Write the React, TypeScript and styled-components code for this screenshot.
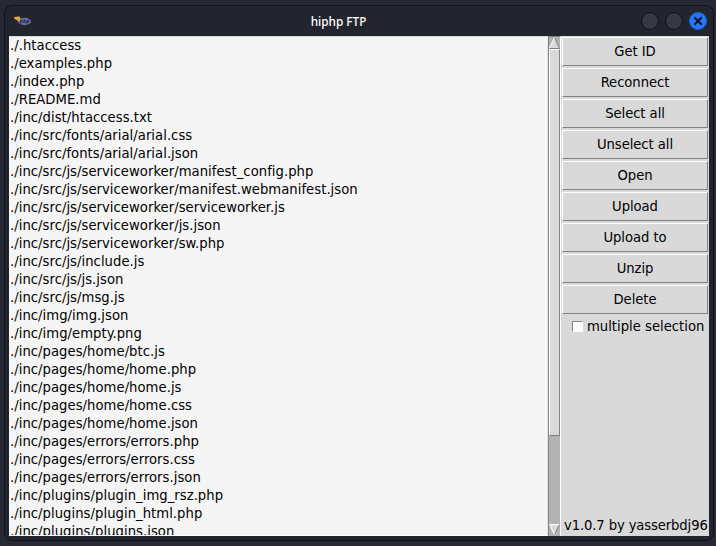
import React from "react";
import styled, { createGlobalStyle } from "styled-components";

const Global = createGlobalStyle`
  * { box-sizing: border-box; }
  body { margin: 0; background: #262935; overflow: hidden; }
`;

const Desktop = styled.div`
  width: 716px;
  height: 546px;
  padding: 5px 2px 5px 4px;
  background: #262935;
  font-family: "DejaVu Sans Condensed", "DejaVu Sans", sans-serif;
  font-stretch: condensed;
  font-size: 14.67px;
  color: #000;
`;

const Window = styled.div`
  height: 536px;
  padding: 0 4px;
  background: #23252e;
  border: 1px solid #10121a;
  border-radius: 8px;
`;

const TitleBar = styled.header`
  display: grid;
  grid-template-columns: 80px 1fr 80px;
  align-items: center;
  height: 30px;
`;

const AppIcon = styled.svg`
  display: block;
  margin-left: 5px;
  margin-top: -1px;
`;

const Title = styled.h1`
  margin: 0;
  padding-right: 41px;
  text-align: center;
  font: 500 11.8px/16px "Noto Sans", sans-serif;
  color: #fff;
`;

const Controls = styled.div`
  display: flex;
  justify-content: flex-end;
  gap: 6px;
  padding-right: 2px;
`;

const Control = styled.button<{ $close?: boolean }>`
  display: grid;
  place-items: center;
  flex: none;
  width: 18px;
  height: 18px;
  padding: 0;
  border-radius: 50%;
  border: 1px solid ${(p) => (p.$close ? "#1f5fd0" : "#0d0f14")};
  background: ${(p) => (p.$close ? "#2777ff" : "#353943")};
`;

const Content = styled.main`
  display: grid;
  grid-template-columns: 539px 13px 1fr;
  height: 500px;
  background: #d9d9d9;
`;

const FileList = styled.ul`
  height: 500px;
  margin: 0;
  padding: 0 0 0 1px;
  overflow: hidden;
  list-style: none;
  background: #f5f5f5;
  box-shadow: inset 0 1px #d9d9d9;
  border-bottom: 1px solid #fff;
  border-right: 1px solid #e4e4e4;
`;

const FileRow = styled.li`
  height: 18px;
  line-height: 18px;
  letter-spacing: 0.04px;
  white-space: pre;
`;

const Scrollbar = styled.div`
  display: flex;
  flex-direction: column;
  height: 500px;
  background: #b3b3b3;
  border-left: 1px solid #828282;
  border-top: 1px solid #828282;
  border-right: 1px solid #fff;
`;

const Thumb = styled.div`
  height: 387px;
  background: #d9d9d9;
  border: 1px solid;
  border-color: #fff #828282 #828282 #fff;
`;

const Trough = styled.div`
  flex: 1;
`;

const Arrow = styled.svg`
  display: block;
  flex: none;
`;

const Sidebar = styled.aside`
  display: flex;
  flex-direction: column;
  min-width: 0;
  padding-top: 1px;
  padding-left: 1px;
`;

const ActionButton = styled.button`
  flex: none;
  height: 29px;
  margin: 0 1px 2px 0;
  padding: 0 0 3px;
  border: 1px solid;
  border-color: #fff #828282 #828282 #fff;
  background: #d9d9d9;
  color: #000;
  font: inherit;
  letter-spacing: -0.06px;
`;

const CheckLabel = styled.label`
  display: flex;
  align-items: center;
  gap: 4px;
  height: 20px;
  padding-left: 10px;
  white-space: nowrap;
`;

const CheckBox = styled.span`
  width: 11px;
  height: 11px;
  background: #fff;
  border: 1px solid;
  border-color: #828282 #fff #fff #828282;
`;

const CheckText = styled.span`
  padding-bottom: 2px;
`;

const Version = styled.footer`
  margin-top: auto;
  height: 21px;
  line-height: 20px;
  padding-left: 2px;
  letter-spacing: -0.12px;
  white-space: nowrap;
`;

const files = [
  "./.htaccess",
  "./examples.php",
  "./index.php",
  "./README.md",
  "./inc/dist/htaccess.txt",
  "./inc/src/fonts/arial/arial.css",
  "./inc/src/fonts/arial/arial.json",
  "./inc/src/js/serviceworker/manifest_config.php",
  "./inc/src/js/serviceworker/manifest.webmanifest.json",
  "./inc/src/js/serviceworker/serviceworker.js",
  "./inc/src/js/serviceworker/js.json",
  "./inc/src/js/serviceworker/sw.php",
  "./inc/src/js/include.js",
  "./inc/src/js/js.json",
  "./inc/src/js/msg.js",
  "./inc/img/img.json",
  "./inc/img/empty.png",
  "./inc/pages/home/btc.js",
  "./inc/pages/home/home.php",
  "./inc/pages/home/home.js",
  "./inc/pages/home/home.css",
  "./inc/pages/home/home.json",
  "./inc/pages/errors/errors.php",
  "./inc/pages/errors/errors.css",
  "./inc/pages/errors/errors.json",
  "./inc/plugins/plugin_img_rsz.php",
  "./inc/plugins/plugin_html.php",
  "./inc/plugins/plugins.json",
];

const actions = [
  "Get ID",
  "Reconnect",
  "Select all",
  "Unselect all",
  "Open",
  "Upload",
  "Upload to",
  "Unzip",
  "Delete",
];

const PhpIcon = () => (
  <AppIcon width="18" height="12" viewBox="0 0 18 12">
    <ellipse cx="10.5" cy="6.5" rx="6.6" ry="3.7" fill="#686ba3" />
    <path
      d="M6.5 8.8V5.5h1.7v1.7H6.5M10 4.2v4M10 5.7h1.5v2.5M13 8.8V5.5h1.7v1.7H13"
      fill="none"
      stroke="#292c46"
      strokeWidth="0.9"
    />
    <path d="M0 2h2.2l1-0.6 3 0.3v3.4l-2 1.4-1.6-1.8-2-0.8z" fill="#e6b345" />
    <path d="M3.2 3.6l1.8 0.6" stroke="#9a6b28" strokeWidth="0.7" />
  </AppIcon>
);

export default function App() {
  return (
    <Desktop>
      <Global />
      <Window>
        <TitleBar>
          <PhpIcon />
          <Title>hiphp FTP</Title>
          <Controls>
            <Control aria-label="Minimize" />
            <Control aria-label="Maximize" />
            <Control $close aria-label="Close">
              <svg width="10" height="10" viewBox="0 0 10 10">
                <path d="M1.3 1.3L8.7 8.7M8.7 1.3L1.3 8.7" stroke="#0d1526" strokeWidth="2.2" />
              </svg>
            </Control>
          </Controls>
        </TitleBar>
        <Content>
          <FileList>
            {files.map((f) => (
              <FileRow key={f}>{f}</FileRow>
            ))}
          </FileList>
          <Scrollbar>
            <Arrow width="11" height="12" viewBox="0 0 11 12">
              <path d="M5.5 0.5L10.5 11.5H0.5z" fill="#d9d9d9" />
              <path d="M5.5 0.5L10.5 11.5H0.5" fill="none" stroke="#828282" />
              <path d="M0.5 11L5.5 0.5" stroke="#fff" />
            </Arrow>
            <Thumb />
            <Trough />
            <Arrow width="11" height="12" viewBox="0 0 11 12">
              <path d="M0.5 0.5H10.5L5.5 10.5z" fill="#d9d9d9" />
              <path d="M10.5 0.5L5.5 10.5" stroke="#828282" />
              <path d="M10.5 0.5H0.5L5.5 10.5" fill="none" stroke="#fff" />
            </Arrow>
          </Scrollbar>
          <Sidebar>
            {actions.map((a) => (
              <ActionButton key={a}>{a}</ActionButton>
            ))}
            <CheckLabel>
              <CheckBox />
              <CheckText>multiple selection</CheckText>
            </CheckLabel>
            <Version>v1.0.7 by yasserbdj96</Version>
          </Sidebar>
        </Content>
      </Window>
    </Desktop>
  );
}
